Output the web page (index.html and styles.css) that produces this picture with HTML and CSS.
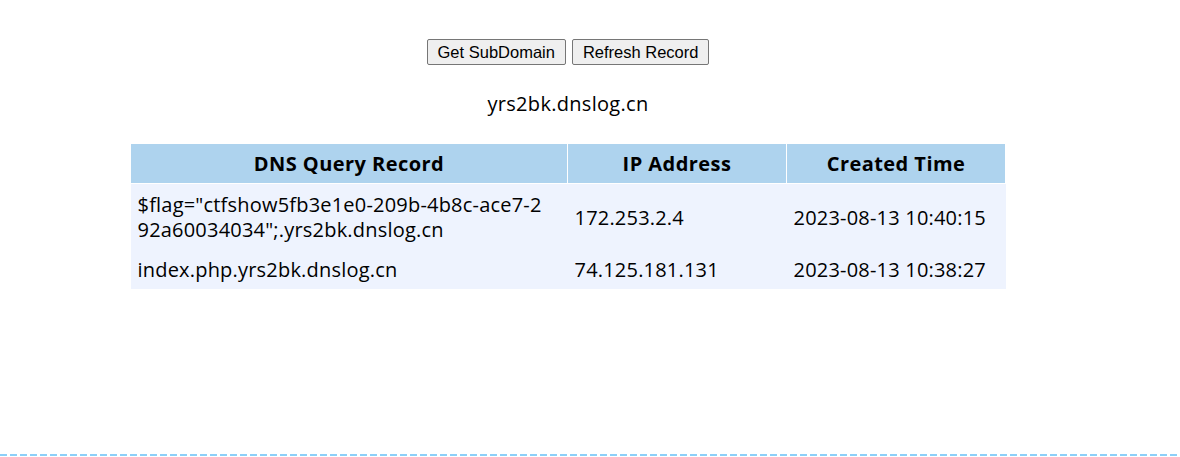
FILE: index.html
```html
<!DOCTYPE html>
<html>
<head>
<meta charset="utf-8">
<title>DNSLog</title>
<link rel="stylesheet" href="styles.css">
</head>
<body>
<div class="page">
  <div class="wrap">
    <div class="actions">
      <button class="btn">Get SubDomain</button>
      <button class="btn">Refresh Record</button>
    </div>
    <div class="domain">yrs2bk.dnslog.cn</div>
    <table class="records">
      <thead>
        <tr>
          <th class="c1">DNS Query Record</th>
          <th class="c2">IP Address</th>
          <th class="c3">Created Time</th>
        </tr>
      </thead>
      <tbody>
        <tr>
          <td class="q">$flag="ctfshow5fb3e1e0-209b-4b8c-ace7-292a60034034";.yrs2bk.dnslog.cn</td>
          <td>172.253.2.4</td>
          <td>2023-08-13 10:40:15</td>
        </tr>
        <tr>
          <td class="q">index.php.yrs2bk.dnslog.cn</td>
          <td>74.125.181.131</td>
          <td>2023-08-13 10:38:27</td>
        </tr>
      </tbody>
    </table>
  </div>
  <div class="divider"></div>
</div>
</body>
</html>
```

FILE: styles.css
```css
html, body {
  margin: 0;
  padding: 0;
  background: #ffffff;
}
body {
  font-family: "Open Sans", "Noto Sans CJK SC", sans-serif;
  color: #000;
}
.page {
  height: 457px;
  display: flex;
  flex-direction: column;
}
.wrap {
  width: 1136px;
  text-align: center;
}
.actions {
  margin-top: 39px;
  height: 26px;
  display: flex;
  justify-content: center;
  gap: 6px;
}
.btn {
  font-family: "Liberation Sans", Arial, sans-serif;
  font-size: 16.5px;
  height: 26px;
  padding: 0 10px;
  background: #efefef;
  border: 1px solid #767676;
  border-radius: 2px;
  color: #000;
}
.domain {
  margin-top: 26px;
  font-size: 20px;
  letter-spacing: 0.3px;
  line-height: 26px;
}
.records {
  margin: 26px auto 0;
  border-collapse: collapse;
  table-layout: fixed;
  font-size: 20px;
  letter-spacing: 0.2px;
}
.records th, .records td {
  box-sizing: border-box;
}
.records th {
  border: 1px solid #ffffff;
  padding: 7px 7px 6px;
  line-height: 26px;
  background: #aed3ee;
  font-weight: bold;
  letter-spacing: 0.45px;
  text-align: center;
}
.records td {
  border: none;
  padding: 8px 7px 7px;
  line-height: 25px;
  background: #eef3fe;
  text-align: left;
  word-break: break-all;
}
.records td.q {
  padding-right: 17px;
}
.c1 { width: 437px; }
.c2 { width: 219px; }
.c3 { width: 219px; }
.divider {
  margin-top: auto;
  margin-bottom: 1px;
  height: 2px;
  background: repeating-linear-gradient(90deg, #8ccff8 0 7px, transparent 7px 10px);
}
```
